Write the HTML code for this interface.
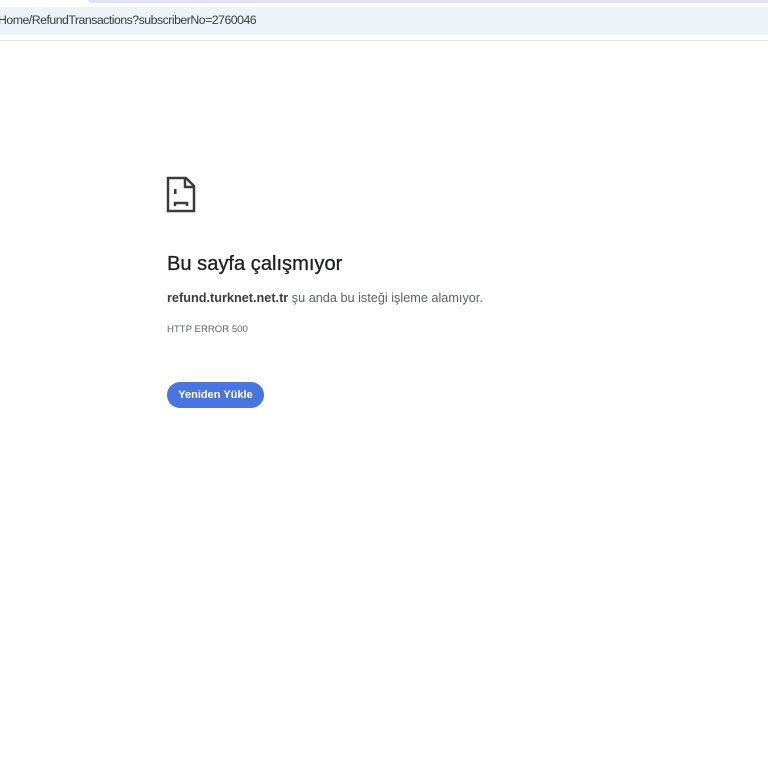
<!DOCTYPE html><html><head><style>
body{margin:0;width:768px;height:768px;background:#fff;position:relative;overflow:hidden;font-family:"Liberation Sans",sans-serif;}
.top{position:absolute;left:88px;top:0;width:680px;height:3px;background:#dfe3f4;border-radius:0 0 0 6px}
.addr{position:absolute;left:0;top:7px;width:768px;height:28px;background:#eef2f9}
.addr span{position:absolute;left:-2px;top:6px;font-size:12.3px;letter-spacing:-0.5px;color:#3c3c3c}
.line{position:absolute;left:0;top:40px;width:768px;height:1px;background:#e3e3e3}
h1{position:absolute;left:167px;top:253px;margin:0;font-size:20.1px;font-weight:normal;color:#202124;-webkit-text-stroke:.3px #202124}
.p{position:absolute;left:167px;top:291px;font-size:12.7px;color:#5f6368}
.p b{color:#3c4043}
.e{position:absolute;left:167px;top:324px;font-size:9.6px;color:#5f6368}
.btn{position:absolute;left:167px;top:382px;width:97px;height:26px;border-radius:13px;background:#4a74e0;color:#fff;font-size:11px;font-weight:bold;text-align:center;line-height:26px}
</style></head><body>
<div class="top"></div>
<div class="addr"><span>Home/RefundTransactions?subscriberNo=2760046</span></div>
<div class="line"></div>
<svg style="position:absolute;left:166px;top:176px" width="30" height="37" viewBox="0 0 30 37">
<path d="M2 2H20L28 10V35H2Z" fill="none" stroke="#3c3c3c" stroke-width="2.5"/>
<path d="M19 2V11H28" fill="none" stroke="#3c3c3c" stroke-width="2.5"/>
<rect x="8" y="13" width="2.5" height="5" fill="#3c3c3c"/>
<path d="M9 30V27H21V30" fill="none" stroke="#3c3c3c" stroke-width="2.5"/>
</svg>
<h1>Bu sayfa çalışmıyor</h1>
<div class="p"><b>refund.turknet.net.tr</b> şu anda bu isteği işleme alamıyor.</div>
<div class="e">HTTP ERROR 500</div>
<div class="btn">Yeniden Yükle</div>
</body></html>
